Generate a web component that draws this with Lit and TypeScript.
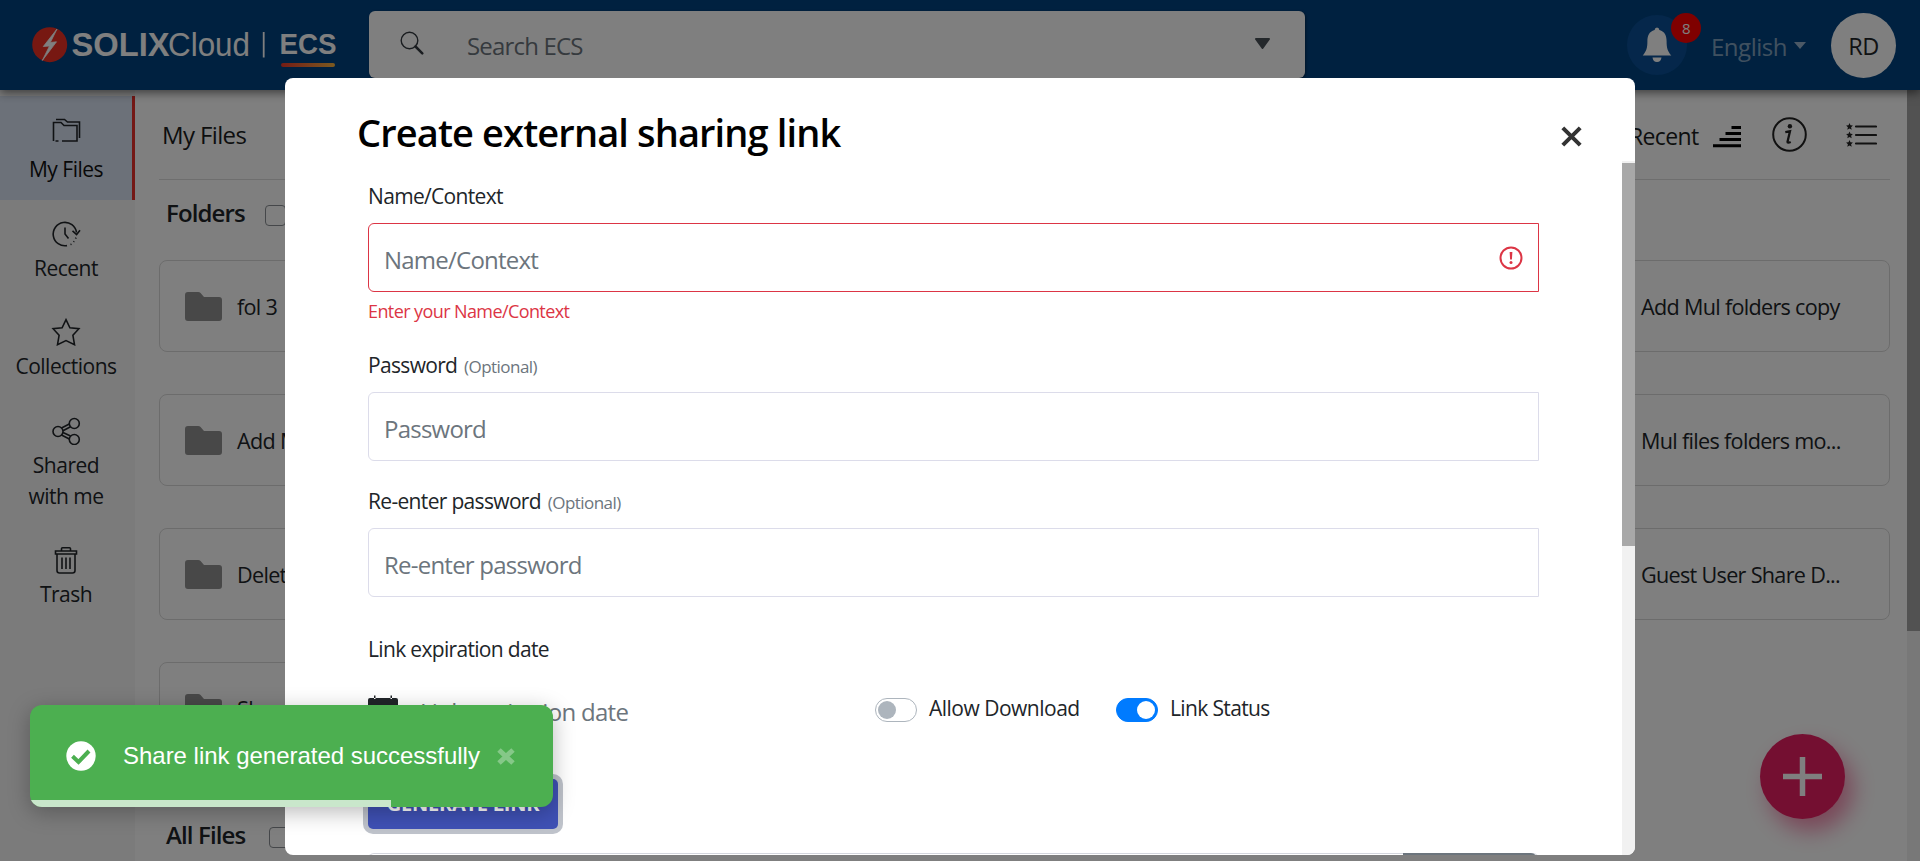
import { LitElement, html, svg, css } from "lit";
import { customElement, state } from "lit/decorators.js";
import { classMap } from "lit/directives/class-map.js";

const icons = {
  folders: svg`<path d="M2.5 25V6.5H10L13 9.5H26V25H11M7.5 25H4.5M5 3.5H13.5L16.5 6H28.5V22"/>`,
  recent: svg`<path d="M25.5 12.5A11.7 11.7 0 1 0 16 25.6"/><path d="M14 7.500V14L17.500 18.500"/><path d="M21.500 10.800L25.600 14.600L29 10.200"/><path d="M19.500 24.600L20.500 24.200M22.500 21.900L23.200 21.200M24.600 18.600L25 17.600"/>`,
  star: svg`<path d="M15 1.700L18.900 9.800L27.900 10.700L21.900 17.300L23.500 26.700L15 22.600L6.500 26.700L8.100 17.300L2.100 10.700L11.100 9.800Z"/>`,
  share: svg`<circle cx="7" cy="14.500" r="5"/><circle cx="23.300" cy="6.500" r="5"/><circle cx="23.300" cy="22.500" r="5"/><path d="M10.500 11L18.300 7M12 13.800L19.500 9.800M12 15.500L19.500 19M10.500 18L18.300 22"/>`,
  trash: svg`<path d="M4.500 5H25.500V8H4.500ZM10.500 5V2.800Q10.500 1.800 11.500 1.800H18.500Q19.500 1.800 19.500 2.800V5M6 8V24.500Q6 27 8.500 27H21.500Q24 27 24 24.500V8M11 11.500V23M15 11.500V23M19 11.500V23"/>`,
};

interface NavItem { icon: unknown; lines: string[]; active?: boolean; }

const nav: NavItem[] = [
  { icon: icons.folders, lines: ["My Files"], active: true },
  { icon: icons.recent, lines: ["Recent"] },
  { icon: icons.star, lines: ["Collections"] },
  { icon: icons.share, lines: ["Shared", "with me"] },
  { icon: icons.trash, lines: ["Trash"] },
];

const folders: string[][] = [
  ["fol 3", "", "", "", "Add Mul folders copy"],
  ["Add Mul files", "", "", "", "Mul files folders mo..."],
  ["Delete folder", "", "", "", "Guest User Share D..."],
  ["Share"],
];

@customElement("ecs-header")
class EcsHeader extends LitElement {
  static styles = css`
    :host { display: flex; align-items: flex-start; height: 90px; background: #004280; box-shadow: 0 3px 9px rgba(0, 0, 0, .5); position: relative; box-sizing: border-box; color: #fff; }
    .logo { width: 345px; height: 90px; margin-right: 24px; flex: none; letter-spacing: 0; }
    .logo text { font-family: "Liberation Sans", sans-serif; fill: #fff; }
    .search { display: flex; align-items: center; width: 936px; height: 67px; margin-top: 11px; background: #fff; border-radius: 6px; color: #6c757d; font-size: 24px; box-shadow: 1px 1px 3px rgba(0,0,0,.4); }
    .glass { width: 24px; height: 24px; margin: 0 43px 3px 31px; }
    .hint { flex: 1; padding-top: 1px; letter-spacing: -.034em; }
    .caret { width: 17px; height: 11px; margin-right: 34px; margin-bottom: 2px; }
    .user { display: flex; align-items: center; height: 90px; margin-left: 322px; }
    .bell { position: relative; width: 60px; height: 60px; border-radius: 50%; background: #0a4f96; display: grid; place-items: center; }
    .badge { position: absolute; left: 44px; top: -2px; width: 30px; height: 30px; border-radius: 50%; background: #f00; font-size: 15px; line-height: 30px; text-align: center; }
    .lang { margin-left: 24px; font-size: 24px; color: rgba(255,255,255,.52); padding-top: 2px; letter-spacing: -.02em; }
    .tri { margin-left: 7px; border: 6.5px solid transparent; border-top: 7px solid rgba(255,255,255,.6); border-bottom: 0; }
    .avatar { margin-left: 25px; width: 65px; height: 65px; border-radius: 50%; background: #fff; color: #212529; font-size: 23.500px; line-height: 66px; text-align: center; }
  `;
  render() {
    return html`
      <svg class="logo" viewBox="0 0 345 90">
        <defs><linearGradient id="g"><stop stop-color="#e8382a"/><stop offset="1" stop-color="#f8b540"/></linearGradient></defs>
        <circle cx="49.700" cy="44.700" r="17.500" fill="#ee3124"/>
        <path d="M57 29L43.300 46.500L49.500 46L42.300 60.500L56.500 41.800L50.300 42.500Z" fill="#fff" stroke="#fff" stroke-width=".8"/>
        <text x="71.500" y="56.300" font-size="34" font-weight="700" textLength="98" lengthAdjust="spacingAndGlyphs">SOLIX</text>
        <text x="168" y="56.300" font-size="34" textLength="82" lengthAdjust="spacingAndGlyphs">Cloud</text>
        <path d="M263.700 32V57.500" stroke="#fff" stroke-width="1.800"/>
        <text x="279.500" y="53.500" font-size="29.500" font-weight="700" textLength="57" lengthAdjust="spacingAndGlyphs">ECS</text>
        <rect x="281" y="63" width="54" height="4" rx="2" fill="url(#g)"/>
      </svg>
      <div class="search">
        <svg class="glass" viewBox="0 0 24 24" fill="none" stroke="#343a40"><circle cx="9.500" cy="9.500" r="8.300" stroke-width="1.400"/><path d="M15.500 15.500L22.300 22.300" stroke-width="2.500" stroke-linecap="round"/></svg>
        <span class="hint">Search ECS</span>
        <svg class="caret" viewBox="0 0 17 11"><path d="M2 1H15L8.500 10Z" fill="#495057" stroke="#495057" stroke-width="2" stroke-linejoin="round"/></svg>
      </div>
      <div class="user">
        <div class="bell">
          <svg width="30" height="36" viewBox="0 0 30 36" fill="#fff"><path d="M15 0.500Q17.200 .5 17.400 3C23 4.500 24.600 9 24.600 14C24.600 21 25.500 24 29.300 28.600H.7C4.500 24 5.400 21 5.400 14C5.400 9 7 4.500 12.600 3Q12.800 .5 15 .5ZM10.500 30.500H19.500Q18.800 35 15 35Q11.200 35 10.500 30.500Z"/></svg>
          <span class="badge">8</span>
        </div>
        <span class="lang">English</span><i class="tri"></i>
        <div class="avatar">RD</div>
      </div>`;
  }
}

@customElement("ecs-files")
class EcsFiles extends LitElement {
  static styles = css`
    :host { display: flex; height: 771px; overflow: hidden; background: #fff; color: #212529; }
    nav { width: 135px; background: #f7f7f7; padding-top: 6px; box-sizing: border-box; flex: none; }
    .item { box-sizing: border-box; display: flex; flex-direction: column; align-items: center; padding: 19.500px 3px 15px 0; font-size: 21px; line-height: 31px; text-align: center; }
    .item svg { width: 30px; height: 28px; fill: none; stroke: #212529; stroke-width: 1.600; margin-bottom: 5px; }
    .item.active { background: #d9e3f3; border-right: 3px solid #e8302a; padding: 20px 0 15.500px; color: #111; }
    .item.active svg { margin-bottom: 9.500px; }
    .item span { display: block; }
    main { flex: 1; padding: 0 17px 0 24px; }
    .bar { display: flex; align-items: center; height: 89px; border-bottom: 1px solid #dcdcdc; font-size: 24px; padding: 0 13px 0 3px; color: #1a1d20; letter-spacing: -.026em; }
    .bar .sort { margin-left: auto; margin-right: 14px; font-size: 23px; padding-top: 3px; }
    .bar svg { flex: none; }
    .rank { margin-top: 4px; }
    .info { margin: 0 39.500px 0 31px; }
    .head { display: flex; align-items: center; height: 64px; font-size: 24px; font-weight: 600; padding-left: 7px; letter-spacing: -.036em; }
    .head span { width: 99px; }
    .all { margin-top: 48px; }
    .all span { width: 103px; }
    .box { width: 19px; height: 19px; border: 1px solid #8a8f94; border-radius: 4px; margin-top: 6px; }
    .grid { display: grid; grid-template-columns: repeat(5, 327px); gap: 42px 24px; padding-top: 16px; }
    .card { box-sizing: border-box; display: flex; align-items: center; height: 92px; border: 1px solid #d9d9d9; border-radius: 8px; padding-left: 25px; font-size: 21.600px; white-space: nowrap; overflow: hidden; letter-spacing: -.032em; }
    .card svg { margin-right: 15px; flex: none; }
    .scroll { width: 13px; background: #f1f1f1; }
    .thumb { height: 541px; background: #a4a4a4; }
  `;
  render() {
    const card = (name: string) => html`<div class="card">
      <svg width="37" height="29" viewBox="0 0 38 29" preserveAspectRatio="none"><path d="M3 0H13.500Q15 0 16 1L19.500 5H35Q38 5 38 8V26Q38 29 35 29H3Q0 29 0 26V3Q0 0 3 0Z" fill="#919191"/></svg>${name}</div>`;
    return html`
      <nav>${nav.map((n) => html`<div class=${classMap({ item: true, active: !!n.active })}>
        <svg viewBox="0 0 30 28">${n.icon}</svg>${n.lines.map((l) => html`<span>${l}</span>`)}</div>`)}</nav>
      <main>
        <div class="bar"><span>My Files</span><span class="sort">Recent</span>
          <svg class="rank" width="28" height="22" viewBox="0 0 28 22"><path d="M18.500 1.500H28M12.500 7.500H28M6.500 13.500H28M0 19.700H28" stroke="#000" stroke-width="3"/></svg>
          <svg class="info" width="35" height="35" viewBox="0 0 35 35"><circle cx="17.500" cy="17.500" r="16.300" fill="none" stroke="#222" stroke-width="2"/><circle cx="17.900" cy="9.300" r="2.200" fill="#222"/><path d="M13.300 15.200L18 14.300L15.500 24.800Q15.400 26.500 18.700 25" fill="none" stroke="#222" stroke-width="2.300"/></svg>
          <svg width="31" height="24" viewBox="0 0 31 24"><path d="M10 3.500H30M10 12H30M10 20.500H30" stroke="#222" stroke-width="2.200" stroke-linecap="round"/>${[3.5, 12, 20.5].map((y) => svg`<path transform="translate(3.500 ${y})" d="M0-3.500L1-1.200L3.400-1L1.600.7L2.200 3.200L0 1.900L-2.200 3.200L-1.600.7L-3.400-1L-1-1.200Z" fill="#222"/>`)}</svg>
        </div>
        <div class="head"><span>Folders</span><i class="box"></i></div>
        <div class="grid">${folders.flat().map(card)}</div>
        <div class="head all"><span>All Files</span><i class="box"></i></div>
      </main>
      <div class="scroll"><div class="thumb"></div></div>`;
  }
}

@customElement("share-dialog")
class ShareDialog extends LitElement {
  static styles = css`
    :host { display: flex; flex-direction: column; width: 1350px; height: 777px; background: #fff; border-radius: 8px; overflow: hidden; color: #212529; }
    header { display: flex; justify-content: space-between; align-items: center; height: 52px; padding: 28px 53px 3px 72px; font-size: 38px; font-weight: 600; color: #000; letter-spacing: -.023em; }
    header svg { margin-top: 8px; }
    .body { display: flex; flex: 1; overflow: hidden; }
    form { width: 1171px; padding: 19px 83px 0 83px; flex: none; }
    .label { height: 32px; line-height: 32px; font-size: 21px; margin: 24px 0 11px; letter-spacing: -.032em; }
    .label.first { margin-top: 0; }
    .label.expiry { margin: 36px 0 28px; }
    small { font-size: 17px; color: #6c757d; margin-left: 2px; letter-spacing: -.032em; }
    .input { box-sizing: border-box; display: flex; align-items: center; justify-content: space-between; height: 69px; border: 1px solid #dcdcea; border-radius: 6px 0 0 6px; padding: 3px 15px 0; font-size: 24px; color: #6c757d; letter-spacing: -.032em; }
    .input.bad { border-color: #dc3545; }
    .input svg { margin-bottom: 3px; }
    .error { color: #dc3545; font-size: 18px; line-height: 26px; margin: 6px 0 25px; letter-spacing: -.033em; }
    .error + .label { margin-top: 0; }
    .options { display: flex; height: 36px; }
    .date { display: flex; width: 507px; font-size: 24px; line-height: 38px; color: #6c757d; gap: 22px; letter-spacing: -.029em; }
    .date svg { margin-top: 2px; }
    .switch { display: flex; width: 241px; gap: 12px; font-size: 21px; line-height: 31px; letter-spacing: -.024em; }
    .on { letter-spacing: -.03em; }
    .track { box-sizing: border-box; width: 42px; height: 24px; border: 1px solid #adb5bd; border-radius: 12px; margin-top: 5px; padding: 2px; }
    .track i { display: block; width: 18px; height: 18px; border-radius: 50%; background: #adb5bd; }
    .on .track { background: #007bff; border-color: #007bff; }
    .on i { background: #fff; margin-left: auto; }
    .go { width: 190px; height: 50px; margin-top: 50px; border-radius: 5px; background: #3f51b5; color: #fff; font-size: 20px; font-weight: 700; line-height: 50px; text-align: center; box-shadow: 0 0 0 5px #bfc3cb; letter-spacing: -.012em; }
    .result { display: flex; margin-top: 24px; height: 50px; border: 1px solid #d4d6de; border-right: 0; border-radius: 6px; }
    .copy { margin: -1px 2px 0 auto; width: 134px; background: #6c757d; border-radius: 0 6px 6px 0; }
    .scroll { width: 13px; background: #f1f1f1; padding-top: 2px; }
    .thumb { height: 383px; background: #a8a8a8; }
  `;
  render() {
    return html`
      <header><span>Create external sharing link</span>
        <svg width="21" height="21" viewBox="0 0 21 21"><path d="M1.800 1.800L19.200 19.200M19.200 1.800L1.800 19.200" stroke="#333" stroke-width="4"/></svg></header>
      <div class="body">
        <form>
          <div class="label first">Name/Context</div>
          <div class="input bad"><span>Name/Context</span>
            <svg width="24" height="24" viewBox="0 0 24 24"><circle cx="12" cy="12" r="10.500" fill="none" stroke="#dc3545" stroke-width="2"/><path d="M10.600 6H13.400L12.900 13.500H11.100Z" fill="#dc3545"/><circle cx="12" cy="16.600" r="1.500" fill="#dc3545"/></svg></div>
          <div class="error">Enter your Name/Context</div>
          <div class="label">Password <small>(Optional)</small></div>
          <div class="input">Password</div>
          <div class="label">Re-enter password <small>(Optional)</small></div>
          <div class="input">Re-enter password</div>
          <div class="label expiry">Link expiration date</div>
          <div class="options">
            <div class="date"><svg width="30" height="34" viewBox="0 -2 30 34"><path d="M2 1H28Q30 1 30 3V30Q30 32 28 32H2Q0 32 0 30V3Q0 1 2 1ZM2 8V30H28V8ZM6-1.500H7.500V2H6ZM22.500-1.500H24V2H22.500Z" fill="#212529" fill-rule="evenodd"/></svg>Link expiration date</div>
            <div class="switch"><span class="track"><i></i></span>Allow Download</div>
            <div class="switch on"><span class="track"><i></i></span>Link Status</div>
          </div>
          <div class="go">GENERATE LINK</div>
          <div class="result"><div class="copy"></div></div>
        </form>
        <div class="scroll"><div class="thumb"></div></div>
      </div>`;
  }
}

@customElement("app-toast")
class AppToast extends LitElement {
  @state() private progress = 69;
  static styles = css`
    :host { display: flex; flex-direction: column; justify-content: space-between; width: 523px; height: 102px; border-radius: 12px; overflow: hidden; background: #4caf50; color: #fff; font: 24px "Liberation Sans", sans-serif; letter-spacing: 0; }
    .row { display: flex; align-items: center; height: 102px; padding-left: 36px; margin-bottom: -7px; }
    .msg { width: 374px; margin-left: 27px; letter-spacing: -.02px; padding-bottom: 1px; }
    .bar { height: 7px; flex: none; background: rgba(255,255,255,.7); }
  `;
  render() {
    return html`<div class="row">
        <svg width="30" height="30" viewBox="0 0 30 30"><circle cx="15" cy="15" r="14.700" fill="#fff"/><path d="M6.500 15.300L12.500 21L23 10" fill="none" stroke="#4caf50" stroke-width="4"/></svg>
        <span class="msg">Share link generated successfully</span>
        <svg width="18" height="17" viewBox="0 0 18 17"><path d="M2 2L16 15M16 2L2 15" stroke="#fff" stroke-opacity=".32" stroke-width="5"/></svg>
      </div>
      <div class="bar" style="width:${this.progress}%"></div>`;
  }
}

@customElement("app-root")
class AppRoot extends LitElement {
  static styles = css`
    :host { display: block; position: relative; width: 1920px; height: 861px; overflow: hidden; font-family: "Open Sans", "Noto Sans", sans-serif; letter-spacing: -.5px; }
    .backdrop { position: absolute; inset: 0; background: rgba(0, 0, 0, .5); display: flex; justify-content: center; align-items: flex-start; padding-top: 78px; }
    .fab { position: absolute; left: 1760px; top: 734px; width: 85px; height: 85px; border-radius: 50%; background: #e91e63; box-shadow: 8px 12px 22px rgba(233, 30, 99, .5); display: grid; place-items: center; }
    .toast { position: absolute; left: 30px; top: 705px; border-radius: 12px; box-shadow: 0 5px 22px rgba(0, 0, 0, .28); }
  `;
  render() {
    return html`
      <ecs-header></ecs-header>
      <ecs-files></ecs-files>
      <div class="fab"><svg width="41" height="41" viewBox="0 0 41 41"><path d="M20.500 1V40M1 20.500H40" stroke="#fff" stroke-width="5.500"/></svg></div>
      <div class="backdrop"><share-dialog></share-dialog></div>
      <app-toast class="toast"></app-toast>`;
  }
}
